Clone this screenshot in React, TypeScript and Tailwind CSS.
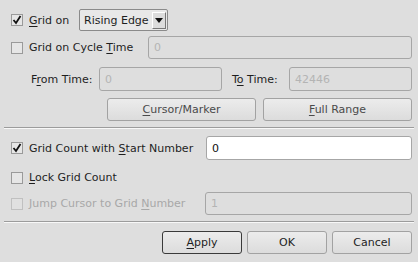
import React from 'react';

const U: React.FC<{ children: React.ReactNode }> = ({ children }) => (
  <span className="underline underline-offset-2 decoration-1">{children}</span>
);

const Check: React.FC<{ checked?: boolean; disabled?: boolean }> = ({ checked, disabled }) => (
  <div
    className={`w-[12px] h-[12px] border flex items-center justify-center shrink-0 ${
      disabled ? 'border-[#c0c0c0] bg-[#e0e0e0]' : 'border-[#9a9a9a] bg-[#e6e6e6]'
    }`}
  >
    {checked && (
      <svg width="10" height="10" viewBox="0 0 10 10">
        <path d="M1.5 5 L4 8 L8.5 1" fill="none" stroke="#111" strokeWidth="1.8" />
      </svg>
    )}
  </div>
);

const Field: React.FC<{ value: string; className?: string; enabled?: boolean }> = ({ value, className, enabled }) => (
  <div
    className={`h-full border rounded-[3px] flex items-center px-[5px] ${
      enabled ? 'bg-white border-[#a6a6a6] text-[#111]' : 'bg-[#dedede] border-[#a6a6a6] text-[#b4b4b4]'
    } ${className ?? ''}`}
  >
    {value}
  </div>
);

const Btn: React.FC<{ children: React.ReactNode; className?: string; dark?: boolean }> = ({ children, className, dark }) => (
  <div
    className={`h-full border rounded-[3px] flex items-center justify-center bg-gradient-to-b from-[#ececec] to-[#dcdcdc] ${
      dark ? 'border-[#3a3a3a]' : 'border-[#a2a2a2]'
    } ${className ?? ''}`}
  >
    {children}
  </div>
);

const Sep: React.FC<{ className?: string }> = ({ className }) => (
  <div className={`ml-[4px] mr-[4px] ${className ?? ''}`}>
    <div className="h-px bg-[#9c9c9c]" />
    <div className="h-px bg-[#f8f8f8]" />
  </div>
);

export default function App() {
  return (
    <div
      className="w-[418px] h-[262px] bg-[#dedede] text-[#1e1e1e] text-[11px] leading-none whitespace-nowrap flex flex-col overflow-hidden"
      style={{ fontFamily: '"DejaVu Sans", sans-serif' }}
    >
      {/* Grid on */}
      <div className="mt-[9px] h-[22px] flex items-center pl-[11px]">
        <Check checked />
        <span className="ml-[6px] w-[50px]">
          <U>G</U>rid on
        </span>
        <div className="w-[89px] h-full border border-[#8a8a8a] rounded-[2px] bg-[#e8e8e8] flex items-center pl-[4px] pr-[1px]">
          <span className="flex-1">Rising Edge</span>
          <div className="w-[14px] h-[17px] border border-t-white border-l-white border-r-[#777] border-b-[#777] bg-[#dcdcdc] flex items-center justify-center">
            <svg width="8" height="5" viewBox="0 0 8 5">
              <path d="M0 0 L8 0 L4 5 Z" fill="#111" />
            </svg>
          </div>
        </div>
      </div>

      {/* Grid on cycle time */}
      <div className="mt-[5px] h-[23px] flex items-center pl-[11px] pr-[6px]">
        <Check />
        <span className="ml-[6px] w-[119px]">
          Grid on Cycle <U>T</U>ime
        </span>
        <Field value="0" className="flex-1" />
      </div>

      {/* From / To */}
      <div className="mt-[8px] h-[24px] flex items-center pl-[31px] pr-[6px]">
        <span className="w-[68px]">
          F<U>r</U>om Time:
        </span>
        <Field value="0" className="w-[123px]" />
        <span className="ml-[10px] w-[57px]">
          T<U>o</U> Time:
        </span>
        <Field value="42446" className="flex-1" />
      </div>

      {/* Range buttons */}
      <div className="mt-[7px] h-[23px] flex pl-[107px] pr-[6px] gap-[7px] text-[#4a4a4a]">
        <Btn className="flex-1">
          <span>
            <U>C</U>ursor/Marker
          </span>
        </Btn>
        <Btn className="flex-1">
          <span>
            <U>F</U>ull Range
          </span>
        </Btn>
      </div>

      <Sep className="mt-[6px]" />

      {/* Grid count */}
      <div className="mt-[7px] h-[24px] flex items-center pl-[11px] pr-[6px]">
        <Check checked />
        <span className="ml-[6px] w-[177px]">
          Grid Count with <U>S</U>tart Number
        </span>
        <Field value="0" enabled className="flex-1" />
      </div>

      {/* Lock */}
      <div className="mt-[6px] h-[23px] flex items-center pl-[11px]">
        <Check />
        <span className="ml-[6px]">
          <U>L</U>ock Grid Count
        </span>
      </div>

      {/* Jump */}
      <div className="mt-[3px] h-[23px] flex items-center pl-[11px] pr-[6px] text-[#a8a8a8]">
        <Check disabled />
        <span className="ml-[6px] w-[176px]">
          Jump Cursor to Grid <U>N</U>umber
        </span>
        <Field value="1" className="flex-1" />
      </div>

      <Sep className="mt-[6px]" />

      {/* Dialog buttons */}
      <div className="mt-[8px] h-[23px] flex justify-end pr-[6px] gap-[5px]">
        <Btn dark className="w-[80px]">
          <span>
            <U>A</U>pply
          </span>
        </Btn>
        <Btn className="w-[80px]">OK</Btn>
        <Btn className="w-[80px]">Cancel</Btn>
      </div>
    </div>
  );
}
